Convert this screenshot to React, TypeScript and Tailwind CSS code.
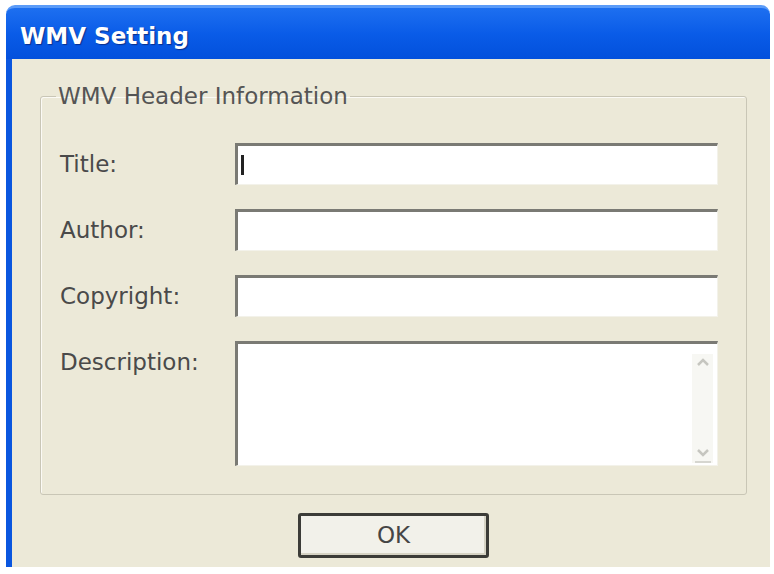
export default function App() {
  const rows = [
    { label: 'Title:', tall: false, caret: true },
    { label: 'Author:', tall: false, caret: false },
    { label: 'Copyright:', tall: false, caret: false },
    { label: 'Description:', tall: true, caret: false },
  ]

  return (
    <main className="min-h-screen bg-white pl-[6px] pt-[5px] font-['DejaVu_Sans',Verdana,sans-serif]">
      <div className="flex h-[562px] w-[764px] flex-col">
        {/* title bar */}
        <div className="flex h-[57px] items-center rounded-t-[9px] border-t-[3px] border-[#5b9bf8] bg-gradient-to-b from-[#1d6ff0] via-[#0a5ce8] to-[#0350dc] px-[14px] pt-[5px]">
          <span className="text-[23px] font-bold text-white [text-shadow:1px_1px_1px_#0a2f8c]">
            WMV Setting
          </span>
        </div>

        {/* body */}
        <div className="flex flex-1 flex-col border-l-[6px] border-[#0a56df] bg-[#ece9d8] pb-[9px] pl-[28px] pr-[23px] pt-[25px]">
          <fieldset className="rounded-[3px] border border-[#c9c6b6] pb-[28px] pl-[19px] pr-[28px] pt-[35px] shadow-[inset_1px_1px_0_#fbfaf5]">
            <legend className="-ml-[4px] px-[2px] text-[23px] leading-[24px] text-[#555]">
              WMV Header Information
            </legend>
            <div className="grid grid-cols-[175px_1fr] gap-y-[24px]">
              {rows.map((row) => (
                <div key={row.label} className="contents">
                  <div className="flex h-[42px] items-center text-[23px] text-[#4a4a4a]">
                    {row.label}
                  </div>
                  <div
                    className={`flex border-b border-l-[3px] border-r border-t-[3px] border-b-[#f3f2ea] border-l-[#7a7a74] border-r-[#f3f2ea] border-t-[#7a7a74] bg-white ${
                      row.tall ? 'h-[125px]' : 'h-[42px] items-center'
                    }`}
                  >
                    {row.caret && <span className="ml-[3px] h-[20px] w-[3px] bg-[#222]" />}
                    {row.tall && (
                      <>
                        <div className="flex-1" />
                        <div className="mb-[2px] mr-[4px] mt-[10px] flex w-[21px] flex-col items-center justify-between bg-[#f7f7f3]">
                          <svg width="16" height="10" viewBox="0 0 16 10" className="mt-[3px]">
                            <path d="M3 8 L8 3 L13 8" fill="none" stroke="#c6c6c0" strokeWidth="2.5" />
                          </svg>
                          <div className="flex flex-col items-center">
                            <svg width="16" height="10" viewBox="0 0 16 10">
                              <path d="M3 2 L8 7 L13 2" fill="none" stroke="#c6c6c0" strokeWidth="2.5" />
                            </svg>
                            <div className="mt-[3px] h-[2px] w-[16px] bg-[#d6d6d0]" />
                          </div>
                        </div>
                      </>
                    )}
                  </div>
                </div>
              ))}
            </div>
          </fieldset>

          <button className="mx-auto mt-[18px] h-[45px] w-[191px] rounded-[3px] border-[3px] border-[#3c3c38] bg-[#f2f1ea] text-[23px] text-[#454545] shadow-[inset_-2px_-2px_0_#d6d3c4]">
            OK
          </button>
        </div>
      </div>
    </main>
  )
}
